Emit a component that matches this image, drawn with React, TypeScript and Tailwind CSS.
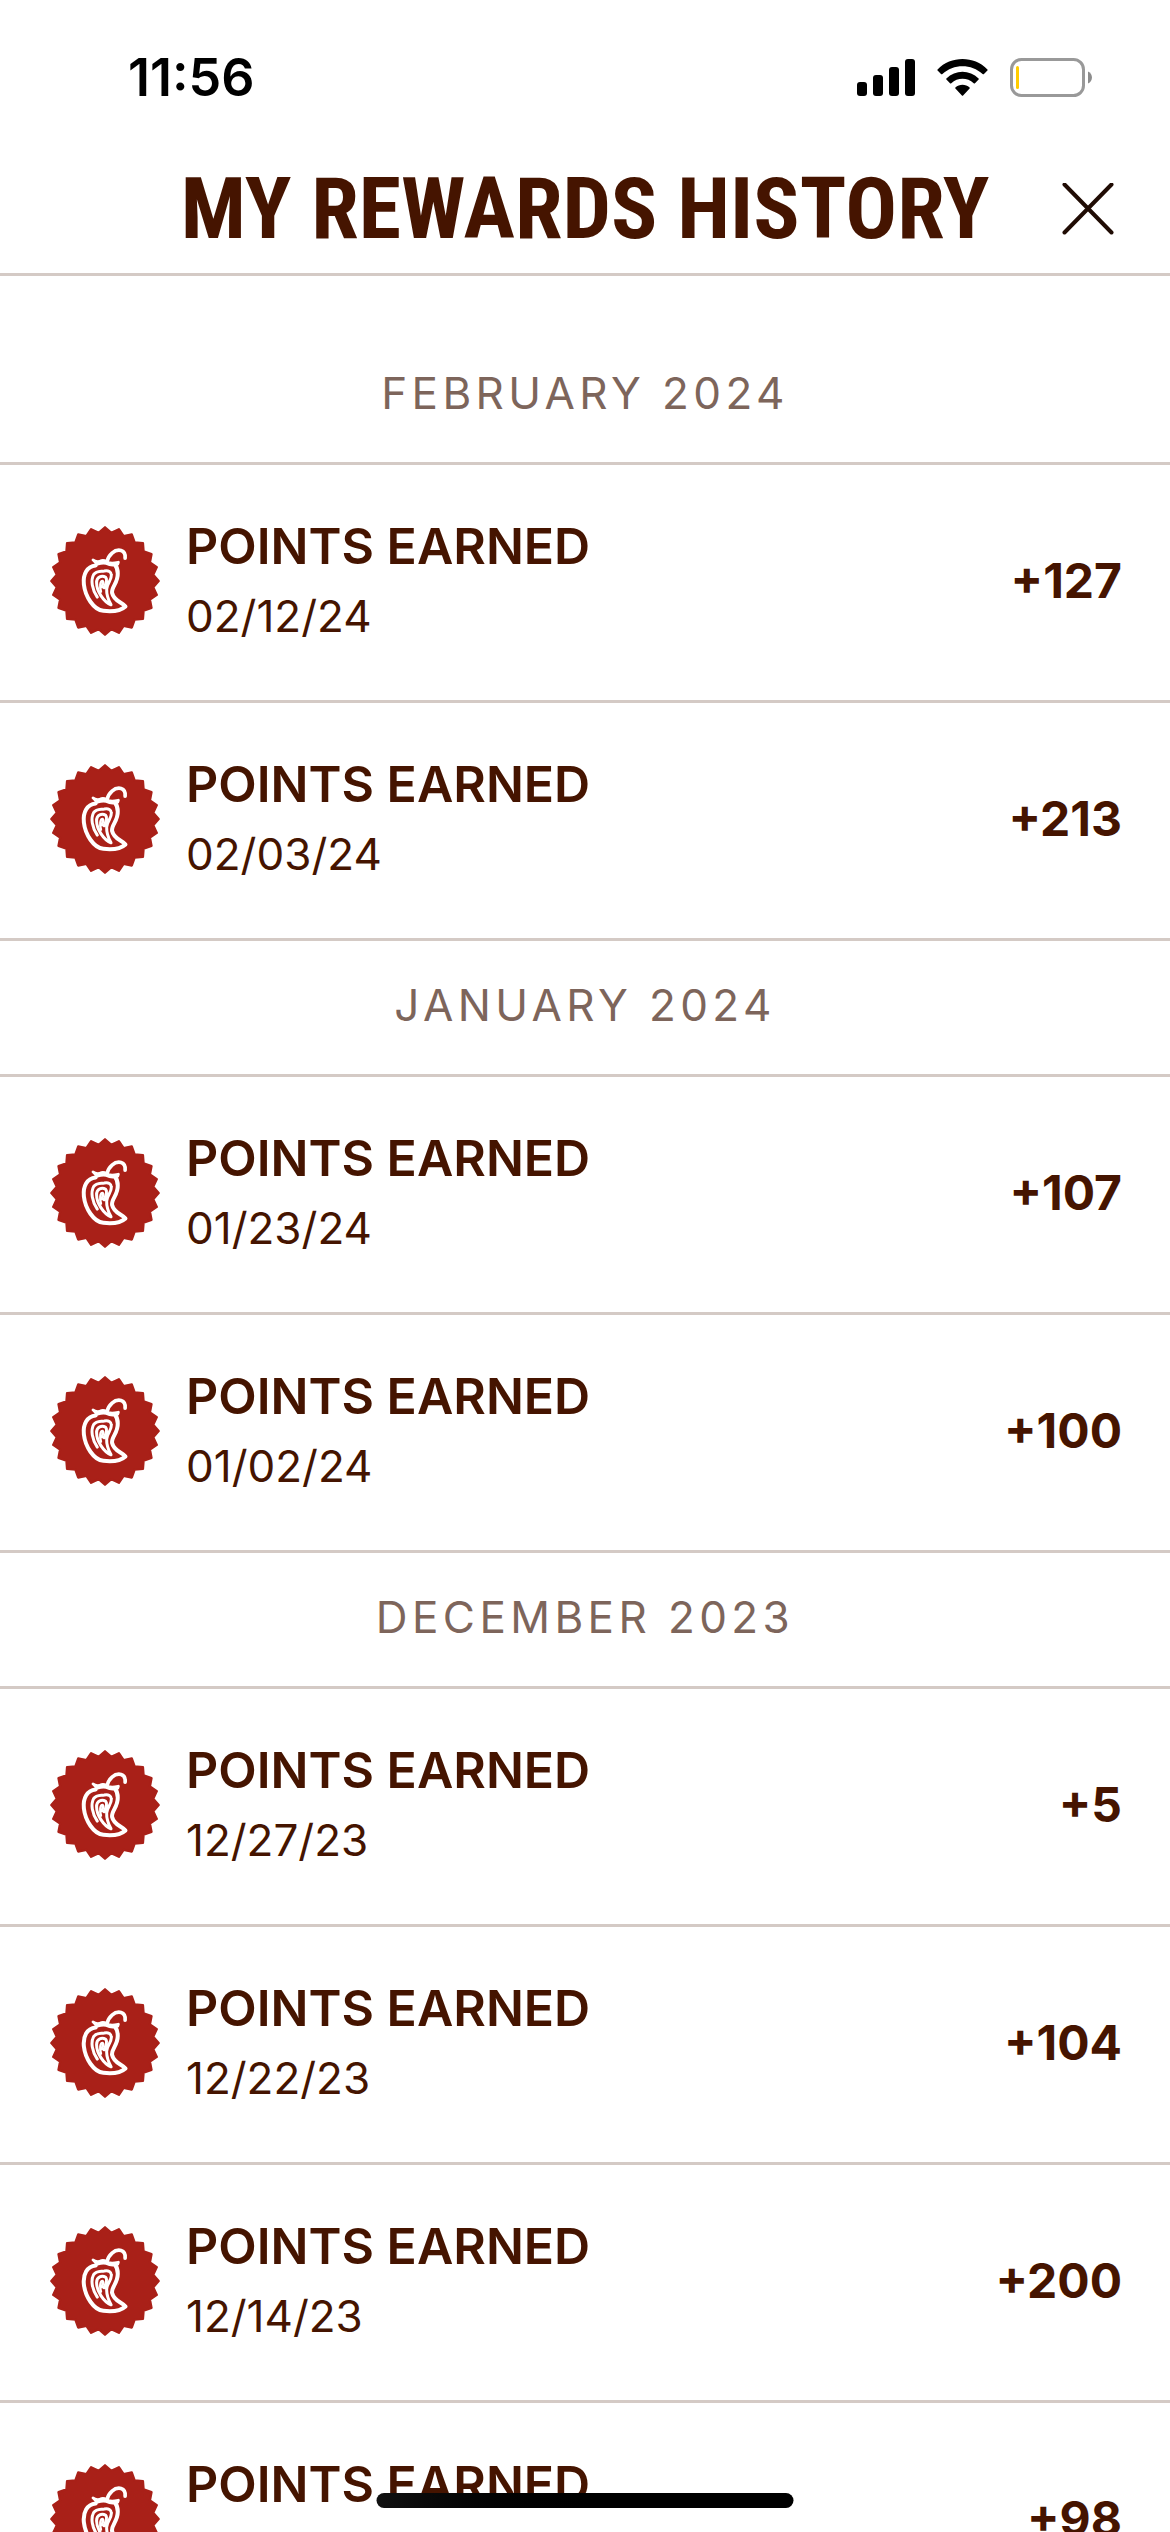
type Entry = { date?: string; points: string };
type Month = { name: string; entries: Entry[] };

const MONTHS: Month[] = [
  {
    name: "FEBRUARY 2024",
    entries: [
      { date: "02/12/24", points: "+127" },
      { date: "02/03/24", points: "+213" },
    ],
  },
  {
    name: "JANUARY 2024",
    entries: [
      { date: "01/23/24", points: "+107" },
      { date: "01/02/24", points: "+100" },
    ],
  },
  {
    name: "DECEMBER 2023",
    entries: [
      { date: "12/27/23", points: "+5" },
      { date: "12/22/23", points: "+104" },
      { date: "12/14/23", points: "+200" },
      { points: "+98" },
    ],
  },
];

// Seal outline: 24 teeth alternating between an outer and an inner radius.
const SEAL = Array.from({ length: 48 }, (_, i) => {
  const r = i % 2 === 0 ? 160 : 145;
  const a = (i * Math.PI) / 24 - Math.PI / 2;
  return `${(164 + r * Math.cos(a)).toFixed(1)},${(164 + r * Math.sin(a)).toFixed(1)}`;
}).join(" ");

function Badge() {
  return (
    <svg viewBox="0 0 328 328" className="size-[110px] shrink-0" aria-hidden="true">
      <polygon points={SEAL} fill="#a92018" stroke="#a92018" strokeWidth="7" strokeLinejoin="round" />
      <g transform="translate(84 52)" fill="none" stroke="#fff" strokeLinecap="round" strokeLinejoin="round">
        <path strokeWidth="11" d="M86 54C90 36 108 16 128 21C138 24 141 33 140 44" />
        <path strokeWidth="8" fill="#fff" d="M44 49C52 55 62 55 70 51C78 48 84 54 91 57C101 60 110 58 120 56L118 62C106 66 94 65 84 60C74 56 64 60 54 63L52 57Z" />
        <path strokeWidth="12" d="M52 66C26 69 14 92 17 122C21 158 46 198 75 201C102 204 128 200 141 188C132 176 106 172 101 147C99 130 119 117 118 90C118 79 115 70 110 64" />
        <path strokeWidth="9" d="M57 160C41 136 37 110 46 93C54 81 66 84 78 82C90 79 99 85 99 94C100 110 86 118 85 136C84 154 91 170 98 183C76 174 55 142 55 118C54 98 72 94 82 101C89 108 82 122 77 132" />
        <path strokeWidth="7" d="M68 144C64 128 65 112 73 112C78 115 72 122 72 130" />
      </g>
    </svg>
  );
}

function StatusBar() {
  return (
    <div className="flex items-center justify-between pt-[11px] pr-[77px] pl-[128px] text-black">
      <time className="text-[52px] leading-[133px] font-semibold">11:56</time>
      <div className="flex items-center gap-[22px]">
        <svg viewBox="0 0 58 38" className="h-[38px] w-[58px]" role="img" aria-label="Signal strength">
          <rect x="0" y="23" width="10" height="14" rx="3" />
          <rect x="16" y="16" width="10" height="21" rx="3" />
          <rect x="32" y="8" width="10" height="29" rx="3" />
          <rect x="48" y="0" width="10" height="37" rx="3" />
        </svg>
        <svg viewBox="0 0 51 38" className="h-[38px] w-[51px]" role="img" aria-label="Wi-Fi">
          <path d="M0.6 10.4C14-3.4 37-3.4 50.4 10.4Q51 11 50.4 11.6L47 15Q46.400 15.600 45.600 15C34.500 4.500 16.500 4.500 5.400 15Q4.600 15.600 4 15L0.600 11.600Q0 11 0.600 10.400Z" />
          <path d="M9.400 19.400C18.400 10.600 32.600 10.600 41.600 19.400Q42.200 20 41.600 20.600L38 24.200Q37.400 24.800 36.700 24.200C30.400 18.400 20.600 18.400 14.300 24.200Q13.600 24.800 13 24.200L9.400 20.600Q8.800 20 9.400 19.400Z" />
          <path d="M18.400 28.400C22.300 25 28.700 25 32.600 28.400Q33.200 29 32.600 29.600L26.100 36.500Q25.500 37.100 24.900 36.500L18.400 29.600Q17.800 29 18.400 28.400Z" />
        </svg>
        <svg viewBox="0 0 83 39" className="h-[39px] w-[83px]" role="img" aria-label="Battery low">
          <rect x="1.500" y="1.500" width="72" height="36" rx="10" fill="none" stroke="#999" strokeWidth="3" />
          <rect x="6" y="8" width="3" height="23" rx="1.500" fill="#ffcc00" />
          <path d="M78 13.500C83.300 15.500 83.300 23.500 78 25.500Z" fill="#8c8c8c" />
        </svg>
      </div>
    </div>
  );
}

export default function App() {
  return (
    <div className="relative flex h-screen flex-col overflow-hidden bg-white font-['Inter',sans-serif] text-[#451400]">
      <StatusBar />
      <header className="grid grid-cols-[1fr_auto_1fr] items-center border-b-3 border-[#d4cac5] px-[56px]">
        <h1 className="col-start-2 font-['Roboto_Condensed','Roboto',sans-serif] text-[86px] leading-[129px] font-bold">
          MY REWARDS HISTORY
        </h1>
        <button type="button" aria-label="Close" className="justify-self-end">
          <svg viewBox="0 0 52 52" className="size-[52px]" fill="none" stroke="#200c04" strokeWidth="4" strokeLinecap="round">
            <path d="M2.500 1.500L49.500 49.500M49.500 1.500L2.500 49.500" />
          </svg>
        </button>
      </header>
      <main className="min-h-0 flex-1 overflow-y-auto pt-[53px] [scrollbar-width:none]">
        {MONTHS.map((month) => (
          <section key={month.name}>
            <h2 className="border-b-3 border-[#d4cac5] pt-[34px] pb-[39px] text-center text-[44px] leading-[60px] tracking-widest text-[#7d655b]">
              {month.name}
            </h2>
            <ul>
              {month.entries.map((entry, i) => (
                <li
                  key={i}
                  className="flex items-center gap-[26px] border-b-3 border-[#d4cac5] pt-[51px] pr-[48px] pb-[54px] pl-[50px]"
                >
                  <Badge />
                  <div className="flex flex-1 flex-col gap-[10px] leading-[60px]">
                    <h3 className="text-[50px] font-semibold">POINTS EARNED</h3>
                    <p className="min-h-[60px] text-[44px]">{entry.date}</p>
                  </div>
                  <span className="text-[48px] font-bold">{entry.points}</span>
                </li>
              ))}
            </ul>
          </section>
        ))}
      </main>
      <div className="absolute bottom-6 left-1/2 h-[15px] w-[417px] -translate-x-1/2 rounded-full bg-gradient-to-r from-[#111] to-black to-60%" />
    </div>
  );
}
